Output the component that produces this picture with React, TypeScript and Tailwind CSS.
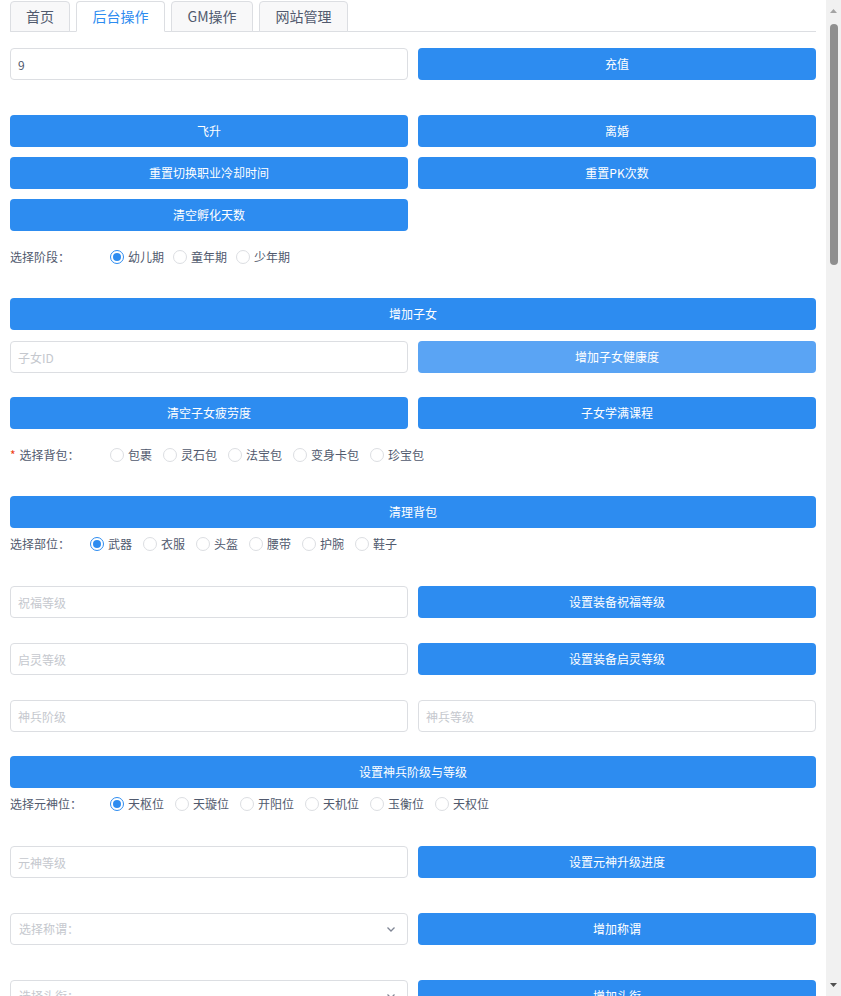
import React, { useState } from 'react';

const font = { fontFamily: '"Microsoft YaHei", "Noto Sans CJK SC", "Liberation Sans", sans-serif' };

const Btn: React.FC<{ label: string; disabled?: boolean }> = ({ label, disabled }) => (
  <button
    className={`h-8 w-full rounded-[4px] text-[12px] text-white ${disabled ? 'bg-[#5aa4f4] cursor-not-allowed' : 'bg-[#2d8cf0]'}`}
  >
    {label}
  </button>
);

const Input: React.FC<{ placeholder?: string; value?: string }> = ({ placeholder, value }) => (
  <input
    defaultValue={value}
    placeholder={placeholder}
    className="h-8 w-full rounded-[4px] border border-[#dcdee2] px-[7px] text-[12px] text-[#515a6e] outline-none placeholder:text-[#c5c8ce]"
  />
);

const Select: React.FC<{ placeholder: string }> = ({ placeholder }) => (
  <div className="flex h-8 w-full items-center justify-between rounded-[4px] border border-[#dcdee2] pl-[8px] pr-[10px]">
    <span className="text-[12px] text-[#c5c8ce]">{placeholder}</span>
    <svg width="12" height="12" viewBox="0 0 12 12" fill="none" stroke="#808695" strokeWidth="1.3">
      <path d="M2.5 4.5 6 8l3.5-3.5" />
    </svg>
  </div>
);

const Row: React.FC<{ className?: string; children: React.ReactNode }> = ({ className = '', children }) => (
  <div className={`grid grid-cols-2 gap-[10px] ${className}`}>{children}</div>
);

const RadioGroup: React.FC<{
  label: string;
  labelWidth: string;
  required?: boolean;
  options: string[];
  initial?: number;
  tight?: boolean;
  className?: string;
}> = ({ label, labelWidth, required, options, initial, tight, className = '' }) => {
  const [sel, setSel] = useState<number | undefined>(initial);
  return (
    <div className={`flex h-8 items-center text-[12px] text-[#515a6e] ${className}`}>
      <div className={`${labelWidth} shrink-0`}>
        {required && <span className="mr-[4px] text-[#ed4014]">*</span>}
        {label}
      </div>
      <div className="flex items-center">
        {options.map((o, i) => (
          <label
            key={o}
            className={`${tight ? 'mr-[9px]' : 'mr-[11px]'} flex cursor-pointer items-center`}
            onClick={() => setSel(i)}
          >
            <span
              className={`mr-[4px] flex h-[14px] w-[14px] items-center justify-center rounded-full border bg-white ${
                sel === i ? 'border-[#2d8cf0]' : 'border-[#dcdee2]'
              }`}
            >
              {sel === i && <span className="h-[8px] w-[8px] rounded-full bg-[#2d8cf0]" />}
            </span>
            {o}
          </label>
        ))}
      </div>
    </div>
  );
};

const tabs = [
  { t: '首页', w: 'w-[60px]' },
  { t: '后台操作', w: 'w-[89px]' },
  { t: 'GM操作', w: 'w-[82px]' },
  { t: '网站管理', w: 'w-[89px]' },
];

const Scrollbar = () => (
  <div className="flex h-screen w-[15px] shrink-0 flex-col items-center bg-[#f1f1f1]">
    <svg className="mt-[9px]" width="7" height="4" viewBox="0 0 7 4">
      <path d="M0 4 3.5 0 7 4Z" fill="#a3a3a3" />
    </svg>
    <div className="mt-[11px] h-[241px] w-[8px] rounded-full bg-[#8f8f8f]" />
    <div className="flex-1" />
    <svg className="mb-[9px]" width="7" height="4" viewBox="0 0 7 4">
      <path d="M0 0 3.5 4 7 0Z" fill="#505050" />
    </svg>
  </div>
);

export default function App() {
  const [active, setActive] = useState(1);
  return (
    <div className="flex h-screen overflow-hidden bg-white" style={font}>
      <div className="h-screen min-w-0 flex-1 overflow-hidden px-[10px] pb-6">
        <div className="flex h-8 items-end gap-[6px] border-b border-[#dcdee2]">
          {tabs.map(({ t, w }, i) => (
            <div
              key={t}
              onClick={() => setActive(i)}
              className={`${w} -mb-px flex h-[31px] cursor-pointer items-center justify-center rounded-t-[4px] border border-[#dcdee2] text-[14px] ${
                active === i ? 'border-b-white bg-white text-[#2d8cf0]' : 'bg-[#f8f8f9] text-[#515a6e]'
              }`}
            >
              {t}
            </div>
          ))}
        </div>

        <Row className="mt-4">
          <Input value="9" />
          <Btn label="充值" />
        </Row>

        <Row className="mt-[35px]">
          <Btn label="飞升" />
          <Btn label="离婚" />
        </Row>
        <Row className="mt-[10px]">
          <Btn label="重置切换职业冷却时间" />
          <Btn label="重置PK次数" />
        </Row>
        <Row className="mt-[10px]">
          <Btn label="清空孵化天数" />
        </Row>

        <RadioGroup
          className="mt-[10px]"
          label="选择阶段："
          labelWidth="w-[100px]"
          options={['幼儿期', '童年期', '少年期']}
          initial={0}
          tight
        />

        <div className="mt-[25px]">
          <Btn label="增加子女" />
        </div>
        <Row className="mt-[11px]">
          <Input placeholder="子女ID" />
          <Btn label="增加子女健康度" disabled />
        </Row>
        <Row className="mt-[24px]">
          <Btn label="清空子女疲劳度" />
          <Btn label="子女学满课程" />
        </Row>

        <RadioGroup
          className="mt-[10px]"
          label="选择背包："
          labelWidth="w-[100px]"
          required
          options={['包裹', '灵石包', '法宝包', '变身卡包', '珍宝包']}
        />

        <div className="mt-[25px]">
          <Btn label="清理背包" />
        </div>

        <RadioGroup label="选择部位：" labelWidth="w-[80px]" options={['武器', '衣服', '头盔', '腰带', '护腕', '鞋子']} initial={0} />

        <Row className="mt-[26px]">
          <Input placeholder="祝福等级" />
          <Btn label="设置装备祝福等级" />
        </Row>
        <Row className="mt-[25px]">
          <Input placeholder="启灵等级" />
          <Btn label="设置装备启灵等级" />
        </Row>
        <Row className="mt-[25px]">
          <Input placeholder="神兵阶级" />
          <Input placeholder="神兵等级" />
        </Row>
        <div className="mt-[24px]">
          <Btn label="设置神兵阶级与等级" />
        </div>

        <RadioGroup
          label="选择元神位："
          labelWidth="w-[100px]"
          options={['天枢位', '天璇位', '开阳位', '天机位', '玉衡位', '天权位']}
          initial={0}
        />

        <Row className="mt-[26px]">
          <Input placeholder="元神等级" />
          <Btn label="设置元神升级进度" />
        </Row>
        <Row className="mt-[35px]">
          <Select placeholder="选择称谓：" />
          <Btn label="增加称谓" />
        </Row>
        <Row className="mt-[35px]">
          <Select placeholder="选择头衔：" />
          <Btn label="增加头衔" />
        </Row>
        <Row className="mt-[35px]">
          <Select placeholder="选择时装：" />
          <Btn label="增加时装" />
        </Row>
      </div>
      <Scrollbar />
    </div>
  );
}
